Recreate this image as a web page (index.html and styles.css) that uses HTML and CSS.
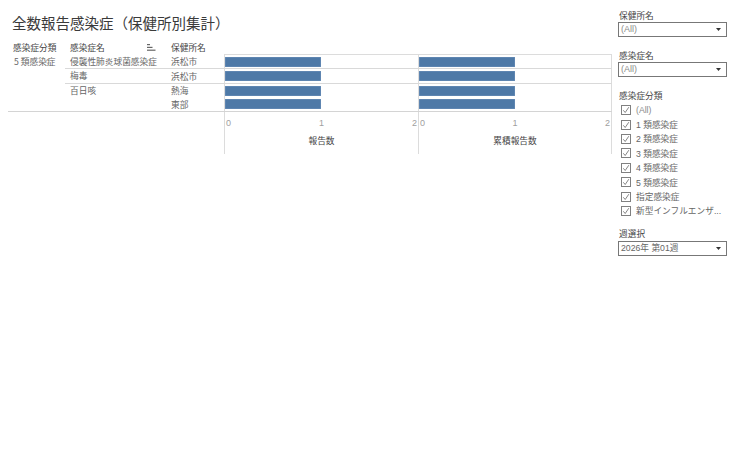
FILE: index.html
```html
<!DOCTYPE html>
<html lang="ja">
<head>
<meta charset="utf-8">
<title>全数報告感染症（保健所別集計）</title>
<link rel="stylesheet" href="styles.css">
</head>
<body>
<div class="page">
  <div class="main">
    <h1 class="title">全数報告感染症（保健所別集計）</h1>
    <div class="head grid-cols">
      <div class="hcell c1">感染症分類</div>
      <div class="hcell c2">感染症名
        <svg class="sort" width="9" height="7" viewBox="0 0 9 7"><rect x="0" y="0" width="3" height="1.2" fill="#666"/><rect x="0" y="2.8" width="5.5" height="1.2" fill="#666"/><rect x="0" y="5.6" width="8.5" height="1.2" fill="#666"/></svg>
      </div>
      <div class="hcell c3">保健所名</div>
      <div class="hcell"></div>
      <div class="hcell"></div>
    </div>
    <div class="table grid-cols">
      <div class="cell cat">5 類感染症</div>

      <div class="cell name r1">侵襲性肺炎球菌感染症</div>
      <div class="cell hc r1">浜松市</div>
      <div class="pane r1 p1 top"><div class="bar" style="width:50%"></div></div>
      <div class="pane r1 p2 top"><div class="bar" style="width:50%"></div></div>

      <div class="cell name r2 sep">梅毒</div>
      <div class="cell hc r2 sep">浜松市</div>
      <div class="pane r2 p1 sep"><div class="bar" style="width:50%"></div></div>
      <div class="pane r2 p2 sep"><div class="bar" style="width:50%"></div></div>

      <div class="cell name r34 sep">百日咳</div>
      <div class="cell hc r3 sep">熱海</div>
      <div class="pane r3 p1 sep"><div class="bar" style="width:50%"></div></div>
      <div class="pane r3 p2 sep"><div class="bar" style="width:50%"></div></div>

      <div class="cell hc r4">東部</div>
      <div class="pane r4 p1"><div class="bar" style="width:50%"></div></div>
      <div class="pane r4 p2"><div class="bar" style="width:50%"></div></div>
    </div>
    <div class="axis grid-cols">
      <div></div><div></div><div></div>
      <div class="apane p1">
        <div class="ticks"><span>0</span><span>1</span><span>2</span></div>
        <div class="atitle">報告数</div>
      </div>
      <div class="apane p2">
        <div class="ticks"><span>0</span><span>1</span><span>2</span></div>
        <div class="atitle">累積報告数</div>
      </div>
    </div>
  </div>

  <div class="side">
    <div class="group first">
      <div class="label">保健所名</div>
      <div class="select"><span class="all">(All)</span><svg class="arrow" width="5" height="3" viewBox="0 0 5 3"><polygon points="0,0 5,0 2.5,3" fill="#333"/></svg></div>
    </div>
    <div class="group">
      <div class="label">感染症名</div>
      <div class="select"><span class="all">(All)</span><svg class="arrow" width="5" height="3" viewBox="0 0 5 3"><polygon points="0,0 5,0 2.5,3" fill="#333"/></svg></div>
    </div>
    <div class="group">
      <div class="label">感染症分類</div>
      <ul class="checks">
        <li><span class="box"><svg width="8" height="8" viewBox="0 0 8 8"><polyline points="1.3,4.3 3.2,6.5 6.8,1.2" fill="none" stroke="#666" stroke-width="0.8"/></svg></span><span class="all">(All)</span></li>
        <li><span class="box"><svg width="8" height="8" viewBox="0 0 8 8"><polyline points="1.3,4.3 3.2,6.5 6.8,1.2" fill="none" stroke="#666" stroke-width="0.8"/></svg></span>1 類感染症</li>
        <li><span class="box"><svg width="8" height="8" viewBox="0 0 8 8"><polyline points="1.3,4.3 3.2,6.5 6.8,1.2" fill="none" stroke="#666" stroke-width="0.8"/></svg></span>2 類感染症</li>
        <li><span class="box"><svg width="8" height="8" viewBox="0 0 8 8"><polyline points="1.3,4.3 3.2,6.5 6.8,1.2" fill="none" stroke="#666" stroke-width="0.8"/></svg></span>3 類感染症</li>
        <li><span class="box"><svg width="8" height="8" viewBox="0 0 8 8"><polyline points="1.3,4.3 3.2,6.5 6.8,1.2" fill="none" stroke="#666" stroke-width="0.8"/></svg></span>4 類感染症</li>
        <li><span class="box"><svg width="8" height="8" viewBox="0 0 8 8"><polyline points="1.3,4.3 3.2,6.5 6.8,1.2" fill="none" stroke="#666" stroke-width="0.8"/></svg></span>5 類感染症</li>
        <li><span class="box"><svg width="8" height="8" viewBox="0 0 8 8"><polyline points="1.3,4.3 3.2,6.5 6.8,1.2" fill="none" stroke="#666" stroke-width="0.8"/></svg></span>指定感染症</li>
        <li><span class="box"><svg width="8" height="8" viewBox="0 0 8 8"><polyline points="1.3,4.3 3.2,6.5 6.8,1.2" fill="none" stroke="#666" stroke-width="0.8"/></svg></span>新型インフルエンザ...</li>
      </ul>
    </div>
    <div class="group week">
      <div class="label">週選択</div>
      <div class="select"><span class="val">2026年 第01週</span><svg class="arrow" width="5" height="3" viewBox="0 0 5 3"><polygon points="0,0 5,0 2.5,3" fill="#333"/></svg></div>
    </div>
  </div>
</div>
</body>
</html>
```

FILE: styles.css
```css
* { box-sizing: border-box; }
html, body { margin: 0; padding: 0; background: #fff; }
body {
  font-family: "Liberation Sans", "Noto Sans CJK JP", sans-serif;
  color: #333;
  width: 736px;
  height: 454px;
  overflow: hidden;
}
.page { display: flex; align-items: flex-start; }
.main { width: 612px; }

.title {
  margin: 0;
  padding: 13px 0 0 12px;
  font-family: "Noto Sans CJK JP", sans-serif;
  font-weight: 400;
  font-size: 14.5px;
  line-height: 20px;
  color: #3a3a3a;
}

.grid-cols {
  display: grid;
  grid-template-columns: 57px 101px 58px 194px 194px;
  margin-left: 8px;
}

.head { margin-top: 8px; height: 13px; }
.hcell {
  font-family: "Noto Sans CJK JP", sans-serif;
  font-size: 8.7px;
  line-height: 13px;
  color: #444;
  padding-left: 5px;
  white-space: nowrap;
  display: flex;
  align-items: center;
}
.hcell.c2 { justify-content: space-between; padding-right: 10px; }
.sort { display: block; }

.table {
  grid-template-rows: 14px 15px 14px 14px;
  border-bottom: 1px solid #d4d4d4;
}
.cell {
  font-family: "Noto Sans CJK JP", sans-serif;
  font-size: 8.7px;
  line-height: 13px;
  color: #666;
  padding-left: 5px;
  white-space: nowrap;
}
.cat { grid-column: 1; grid-row: 1 / 5; padding-left: 6px; padding-top: 1px; }
.name { grid-column: 2; }
.hc { grid-column: 3; display: flex; align-items: center; }
.name.r1 { grid-row: 1; padding-top: 1px; }
.name.r2 { grid-row: 2; }
.name.r34 { grid-row: 3 / 5; }
.r1 { grid-row: 1; }
.r2 { grid-row: 2; }
.r3 { grid-row: 3; }
.r4 { grid-row: 4; }
.sep { border-top: 1px solid #d9d9d9; }
.name.sep { padding-top: 0; }

.pane {
  display: flex;
  align-items: center;
  border-left: 1px solid #dcdcdc;
  padding-right: 1px;
}
.pane.top { border-top: 1px solid #dcdcdc; }
.p1 { grid-column: 4; }
.p2 { grid-column: 5; border-right: 1px solid #dcdcdc; }
.bar {
  height: 10px;
  background: #4e79a7;
  box-shadow: inset 0 0 0 0.5px #6f92bb;
}

.axis { height: 42px; }
.apane { border-left: 1px solid #dcdcdc; padding: 6px 1px 0 1px; }
.ticks {
  display: flex;
  justify-content: space-between;
  font-family: "Liberation Sans", sans-serif;
  font-size: 9px;
  line-height: 11px;
  color: #a0a0a0;
}
.atitle {
  margin-top: 6px;
  text-align: center;
  font-family: "Noto Sans CJK JP", sans-serif;
  font-size: 8.7px;
  line-height: 11px;
  color: #444;
}

.side { width: 110px; margin-left: 6px; padding-top: 10px; }
.group { margin-top: 13px; }
.group.first { margin-top: 0; }
.group.week { margin-top: 10px; }
.label {
  font-family: "Noto Sans CJK JP", sans-serif;
  font-size: 8.7px;
  line-height: 11px;
  color: #444;
  padding-left: 1px;
}
.select {
  margin-top: 1px;
  height: 15px;
  width: 109px;
  border: 1px solid #777;
  display: flex;
  align-items: center;
  justify-content: space-between;
  padding: 0 5px 0 2px;
  font-size: 9px;
  line-height: 13px;
}
.all { color: #8a8a8a; font-family: "Liberation Sans", sans-serif; }
.val { color: #666; font-family: "Liberation Sans", "Noto Sans CJK JP", sans-serif; font-size: 8.7px; }
.arrow { display: block; }
.week .select { margin-top: 2px; }

.checks {
  list-style: none;
  margin: 2px 0 0 0;
  padding: 0 0 0 3px;
}
.checks li {
  height: 14.4px;
  display: flex;
  align-items: center;
  font-family: "Liberation Sans", "Noto Sans CJK JP", sans-serif;
  font-size: 8.7px;
  color: #666;
  white-space: nowrap;
}
.box {
  width: 10px;
  height: 10px;
  border: 1px solid #808080;
  margin-right: 5px;
  display: flex;
  align-items: center;
  justify-content: center;
  flex: none;
}
.box svg { display: block; }
```
